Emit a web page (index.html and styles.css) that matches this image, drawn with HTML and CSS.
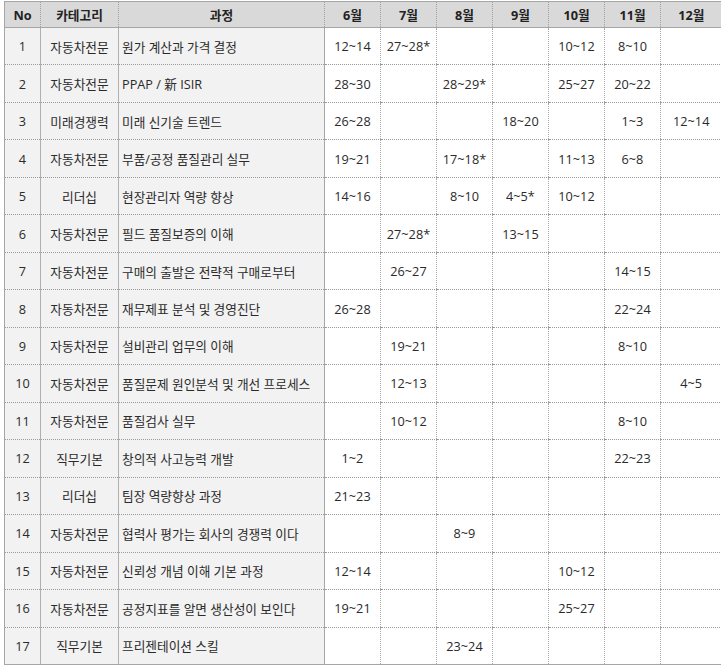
FILE: index.html
```html
<!DOCTYPE html>
<html lang="ko">
<head>
<meta charset="utf-8">
<title>교육 일정</title>
<link rel="stylesheet" href="styles.css">
</head>
<body>
<table class="schedule">
  <colgroup>
    <col class="c-no"><col class="c-cat"><col class="c-course">
    <col class="c-m"><col class="c-m"><col class="c-m"><col class="c-m"><col class="c-m"><col class="c-m"><col class="c-m12">
  </colgroup>
  <thead>
    <tr>
      <th>No</th><th>카테고리</th><th>과정</th>
      <th class="m">6월</th><th class="m">7월</th><th class="m">8월</th><th class="m">9월</th><th class="m">10월</th><th class="m">11월</th><th class="m">12월</th>
    </tr>
  </thead>
  <tbody>
    <tr><td class="no">1</td><td class="cat">자동차전문</td><td class="course">원가 계산과 가격 결정</td><td>12~14</td><td>27~28*</td><td></td><td></td><td>10~12</td><td>8~10</td><td></td></tr>
    <tr><td class="no">2</td><td class="cat">자동차전문</td><td class="course">PPAP / 新 ISIR</td><td>28~30</td><td></td><td>28~29*</td><td></td><td>25~27</td><td>20~22</td><td></td></tr>
    <tr><td class="no">3</td><td class="cat">미래경쟁력</td><td class="course">미래 신기술 트렌드</td><td>26~28</td><td></td><td></td><td>18~20</td><td></td><td>1~3</td><td>12~14</td></tr>
    <tr><td class="no">4</td><td class="cat">자동차전문</td><td class="course">부품/공정 품질관리 실무</td><td>19~21</td><td></td><td>17~18*</td><td></td><td>11~13</td><td>6~8</td><td></td></tr>
    <tr><td class="no">5</td><td class="cat">리더십</td><td class="course">현장관리자 역량 향상</td><td>14~16</td><td></td><td>8~10</td><td>4~5*</td><td>10~12</td><td></td><td></td></tr>
    <tr><td class="no">6</td><td class="cat">자동차전문</td><td class="course">필드 품질보증의 이해</td><td></td><td>27~28*</td><td></td><td>13~15</td><td></td><td></td><td></td></tr>
    <tr><td class="no">7</td><td class="cat">자동차전문</td><td class="course">구매의 출발은 전략적 구매로부터</td><td></td><td>26~27</td><td></td><td></td><td></td><td>14~15</td><td></td></tr>
    <tr><td class="no">8</td><td class="cat">자동차전문</td><td class="course">재무제표 분석 및 경영진단</td><td>26~28</td><td></td><td></td><td></td><td></td><td>22~24</td><td></td></tr>
    <tr><td class="no">9</td><td class="cat">자동차전문</td><td class="course">설비관리 업무의 이해</td><td></td><td>19~21</td><td></td><td></td><td></td><td>8~10</td><td></td></tr>
    <tr><td class="no">10</td><td class="cat">자동차전문</td><td class="course">품질문제 원인분석 및 개선 프로세스</td><td></td><td>12~13</td><td></td><td></td><td></td><td></td><td>4~5</td></tr>
    <tr><td class="no">11</td><td class="cat">자동차전문</td><td class="course">품질검사 실무</td><td></td><td>10~12</td><td></td><td></td><td></td><td>8~10</td><td></td></tr>
    <tr><td class="no">12</td><td class="cat">직무기본</td><td class="course">창의적 사고능력 개발</td><td>1~2</td><td></td><td></td><td></td><td></td><td>22~23</td><td></td></tr>
    <tr><td class="no">13</td><td class="cat">리더십</td><td class="course">팀장 역량향상 과정</td><td>21~23</td><td></td><td></td><td></td><td></td><td></td><td></td></tr>
    <tr><td class="no">14</td><td class="cat">자동차전문</td><td class="course">협력사 평가는 회사의 경쟁력 이다</td><td></td><td></td><td>8~9</td><td></td><td></td><td></td><td></td></tr>
    <tr><td class="no">15</td><td class="cat">자동차전문</td><td class="course">신뢰성 개념 이해 기본 과정</td><td>12~14</td><td></td><td></td><td></td><td>10~12</td><td></td><td></td></tr>
    <tr><td class="no">16</td><td class="cat">자동차전문</td><td class="course">공정지표를 알면 생산성이 보인다</td><td>19~21</td><td></td><td></td><td></td><td>25~27</td><td></td><td></td></tr>
    <tr><td class="no">17</td><td class="cat">직무기본</td><td class="course">프리젠테이션 스킬</td><td></td><td></td><td>23~24</td><td></td><td></td><td></td><td></td></tr>
  </tbody>
</table>
</body>
</html>
```

FILE: styles.css
```css
html, body {
  margin: 0;
  padding: 0;
  background: #ffffff;
}

body {
  padding: 1px 0 0 4px;
  font-family: "Open Sans", "Noto Sans CJK KR", sans-serif;
  font-size: 12.7px;
  color: #2a2a2a;
}

.schedule {
  border-collapse: collapse;
  table-layout: fixed;
  width: 717px;
}

.c-no { width: 36px; }
.c-cat { width: 78px; }
.c-course { width: 206px; }
.c-m { width: 56px; }
.c-m12 { width: 61px; }

.schedule thead tr {
  height: 26px;
}

.schedule tbody tr {
  height: 37.47px;
}

.schedule th {
  padding: 0;
  background: #d9d9d9;
  font-weight: 700;
  color: #222;
  text-align: center;
  border-top: 1px solid #a6a6a6;
  border-bottom: 1px solid #a6a6a6;
  border-left: 1px dotted #a0a0a0;
  border-right: 1px dotted #a0a0a0;
}

.schedule th:first-child {
  border-left: 1px solid #a6a6a6;
}

.schedule th:last-child {
  border-right: none;
}

.schedule td {
  padding: 0;
  text-align: center;
  border-bottom: 1px dotted #9a9a9a;
  border-left: 1px dotted #a8a8a8;
  white-space: nowrap;
}

.schedule tbody tr:last-child td {
  border-bottom: 1px solid #a6a6a6;
}

.schedule td.no,
.schedule td.cat,
.schedule td.course {
  background: #f2f2f2;
  border-left: 1px solid #b0b0b0;
}

.schedule td.no {
  border-left: 1px solid #a6a6a6;
}

.schedule td.course {
  text-align: left;
  padding-left: 3px;
  border-right: 1px solid #a6a6a6;
}
```
